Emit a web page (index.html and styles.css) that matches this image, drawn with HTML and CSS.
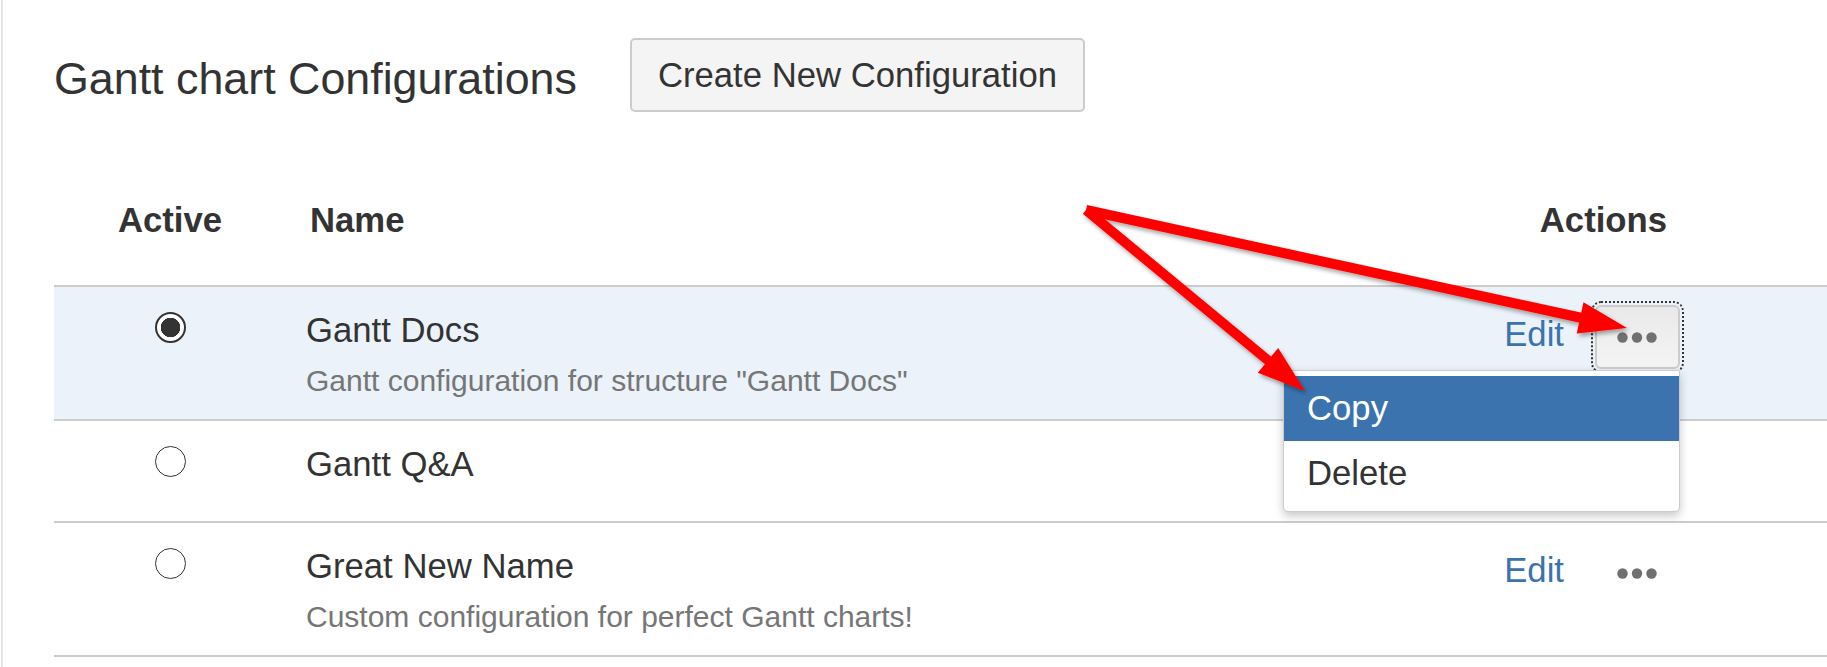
FILE: index.html
```html
<!doctype html>
<html>
<head>
<meta charset=utf-8>
<title>Gantt chart Configurations</title>
<link rel="stylesheet" href="styles.css">
</head>

<body>

<div class="page">

<header class="page-header">
  <h2>Gantt chart Configurations</h2>
  <button class="btn">Create New Configuration</button>
</header>

<section class="configs">

  <div class="row head">
    <div class="cell active">Active</div>
    <div class="cell name">Name</div>
    <div class="cell actions">Actions</div>
  </div>

  <div class="row selected">
    <div class="cell active"><span class="radio checked"></span></div>
    <div class="cell name">
      <div class="title">Gantt Docs</div>
      <div class="desc">Gantt configuration for structure "Gantt Docs"</div>
    </div>
    <div class="cell actions">
      <a class="edit" href="#">Edit</a>
      <div class="more open">
        <button class="more-btn">
          <svg width="40" height="11" viewBox="0 0 40 11"><circle cx="5.5" cy="5.5" r="5.2"/><circle cx="20" cy="5.5" r="5.2"/><circle cx="34.5" cy="5.5" r="5.2"/></svg>
        </button>
        <ul class="dropdown">
          <li class="current">Copy</li>
          <li>Delete</li>
        </ul>
      </div>
    </div>
  </div>

  <div class="row">
    <div class="cell active"><span class="radio"></span></div>
    <div class="cell name">
      <div class="title">Gantt Q&amp;A</div>
    </div>
    <div class="cell actions">
      <a class="edit" href="#">Edit</a>
      <div class="more">
        <button class="more-btn">
          <svg width="40" height="11" viewBox="0 0 40 11"><circle cx="5.5" cy="5.5" r="5.2"/><circle cx="20" cy="5.5" r="5.2"/><circle cx="34.5" cy="5.5" r="5.2"/></svg>
        </button>
      </div>
    </div>
  </div>

  <div class="row">
    <div class="cell active"><span class="radio"></span></div>
    <div class="cell name">
      <div class="title">Great New Name</div>
      <div class="desc">Custom configuration for perfect Gantt charts!</div>
    </div>
    <div class="cell actions">
      <a class="edit" href="#">Edit</a>
      <div class="more">
        <button class="more-btn">
          <svg width="40" height="11" viewBox="0 0 40 11"><circle cx="5.5" cy="5.5" r="5.2"/><circle cx="20" cy="5.5" r="5.2"/><circle cx="34.5" cy="5.5" r="5.2"/></svg>
        </button>
      </div>
    </div>
  </div>

</section>

</div>

<!-- red arrows drawn on top of the screenshot -->
<svg class="annotations" width="1827" height="667" viewBox="0 0 1827 667">
  <defs>
    <filter id="shade" x="-10%" y="-20%" width="130%" height="150%">
      <feDropShadow dx="2" dy="3" stdDeviation="2" flood-color="#000" flood-opacity="0.35"/>
    </filter>
  </defs>
  <g filter="url(#shade)" fill="#ff0000" stroke="#ff0000" stroke-width="10">
    <line x1="1086" y1="210" x2="1582" y2="318"/>
    <line x1="1086" y1="210" x2="1270" y2="362"/>
    <polygon stroke="none" points="1627,328 1583.5,302.2 1576.7,333.4"/>
    <polygon stroke="none" points="1305,391 1278.2,348.1 1257.8,372.7"/>
  </g>
</svg>

</body>
</html>
```

FILE: styles.css
```css
body {
  margin: 0;
  font-family: "Liberation Sans", Arial, sans-serif;
  color: #333;
  background: #fff;
}

.page {
  margin-left: 1px;
  border-left: 2px solid #e5e5e5;
  padding-left: 51px;
  min-height: 667px;
  box-sizing: border-box;
}

.page-header {
  display: flex;
  align-items: flex-start;
  gap: 53px;
  padding-top: 38px;
}

.page-header h2 {
  margin: 13px 0 0;
  font-size: 44.8px;
  font-weight: normal;
  line-height: 54px;
}

.btn {
  font-family: inherit;
  font-size: 34.7px;
  line-height: 50px;
  color: #333;
  padding: 10px 26px;
  border: 2px solid #ccc;
  border-radius: 5px;
  background: #f4f4f4;
}

.configs {
  margin-top: 65px;
  font-size: 34.7px;
}

.row {
  display: grid;
  grid-template-columns: 232px 1fr 347px;
  border-bottom: 2px solid #ccc;
}

.row.selected {
  background: #ebf2f9;
}

.cell {
  padding: 18px 0;
}

.cell.name {
  padding-left: 20px;
}

.row .actions {
  display: flex;
  justify-content: flex-end;
  align-items: flex-start;
  gap: 31px;
  padding-right: 147px;
}

.row.head .cell {
  padding: 18px 0 40px;
  font-weight: bold;
  line-height: 50px;
}

.row.head .active {
  text-align: center;
}

.row.head .name {
  padding-left: 24px;
}

.row.head .actions {
  display: block;
  text-align: right;
  padding-right: 160px;
}

.radio {
  display: block;
  width: 31px;
  height: 31px;
  margin: 7px auto 0;
  box-sizing: border-box;
  border: 1.5px solid #333;
  border-radius: 50%;
  background: #fff;
}

.radio.checked {
  border-width: 2.5px;
  background: radial-gradient(circle, #333 0 9.5px, #fff 10px);
}

.title {
  line-height: 50px;
}

.desc {
  margin-top: 5px;
  font-size: 30px;
  line-height: 41px;
  color: #767676;
}

.edit {
  margin-top: 4px;
  line-height: 50px;
  color: #3b73af;
  text-decoration: none;
}

.more {
  position: relative;
}

.more-btn {
  display: flex;
  align-items: center;
  justify-content: center;
  width: 85px;
  height: 64px;
  padding: 0 2px 0 0;
  border: 2px solid transparent;
  border-radius: 6px;
  background: transparent;
}

.more-btn svg {
  fill: #707070;
}

.more.open .more-btn {
  border-color: #ccc;
  background: linear-gradient(#e9e9e9, #f4f4f4);
  outline: 2px dotted #333;
  outline-offset: 2px;
}

.dropdown {
  position: absolute;
  z-index: 10;
  top: calc(100% + 1px);
  right: 0;
  width: 397px;
  box-sizing: border-box;
  margin: 0;
  padding: 5px 0;
  list-style: none;
  background: #fff;
  border: 1px solid #ccc;
  border-radius: 0 0 5px 5px;
  box-shadow: 0 4px 10px rgba(0, 0, 0, 0.22);
}

.dropdown li {
  padding: 7px 23px 8px;
  line-height: 50px;
}

.dropdown li.current {
  background: #3b73af;
  color: #fff;
}

.annotations {
  position: absolute;
  top: 0;
  left: 0;
  z-index: 20;
  pointer-events: none;
}
```
